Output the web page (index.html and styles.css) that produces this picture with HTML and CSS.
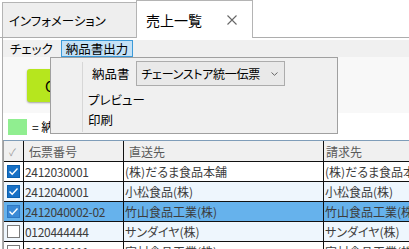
FILE: index.html
```html
<!DOCTYPE html>
<html lang="ja">
<head>
  <meta charset="UTF-8" />
  <title>売上一覧</title>
  <link rel="stylesheet" href="styles.css">
</head>
<body>
  <div class="tabs">
    <div class="tab">インフォメーション</div>
    <div class="tab active">売上一覧
      <svg class="close" width="10" height="10" viewBox="0 0 10 10"><path d="M0.5 0.5L9.5 9.5M9.5 0.5L0.5 9.5" stroke="#666" stroke-width="1.1"/></svg>
    </div>
  </div>

  <div class="page">
    <div class="menubar">
      <span class="menu-item">チェック</span>
      <span class="menu-item open">納品書出力</span>
    </div>

    <div class="toolbar">
      <button class="btn-green">CSV出力</button>
    </div>

    <div class="legend">
      <span class="swatch"></span>= 納品書出力済み
    </div>

    <div class="grid">
      <div class="row head">
        <div class="cell chk"><span class="tick">✓</span></div>
        <div class="cell">伝票番号</div>
        <div class="cell">直送先</div>
        <div class="cell last">請求先</div>
      </div>
      <div class="row">
        <div class="cell chk"><span class="box on"></span></div>
        <div class="cell num">2412030001</div>
        <div class="cell">(株)だるま食品本舗</div>
        <div class="cell">(株)だるま食品本舗</div>
      </div>
      <div class="row alt">
        <div class="cell chk"><span class="box on"></span></div>
        <div class="cell num">2412040001</div>
        <div class="cell">小松食品(株)</div>
        <div class="cell">小松食品(株)</div>
      </div>
      <div class="row sel">
        <div class="cell chk"><span class="box on"></span></div>
        <div class="cell num">2412040002-02</div>
        <div class="cell">竹山食品工業(株)</div>
        <div class="cell">竹山食品工業(株)</div>
      </div>
      <div class="row alt">
        <div class="cell chk"><span class="box"></span></div>
        <div class="cell num">0120444444</div>
        <div class="cell">サンダイヤ(株)</div>
        <div class="cell">サンダイヤ(株)</div>
      </div>
      <div class="row">
        <div class="cell chk"><span class="box"></span></div>
        <div class="cell num">0120111111</div>
        <div class="cell">宮村食品工業(株)</div>
        <div class="cell">宮村食品工業(株)</div>
      </div>
    </div>

    <!-- 納品書出力 のドロップダウン -->
    <div class="dropdown">
      <div class="dd-gutter"></div>
      <div class="dd-items">
        <div class="dd-host">
          <span>納品書</span>
          <div class="combo">
            <span>チェーンストア統一伝票</span>
            <svg class="arrow" width="7" height="4" viewBox="0 0 7 4"><path d="M0.5 0.5L3.5 3.3L6.5 0.5" fill="none" stroke="#666" stroke-width="1"/></svg>
          </div>
        </div>
        <div class="dd-item">プレビュー</div>
        <div class="dd-item">印刷</div>
      </div>
    </div>
  </div>
</body>
</html>
```

FILE: styles.css
```css
body {
  margin: 0;
  background: #fff;
  font-family: "Noto Sans CJK JP", sans-serif;
  font-size: 12px;
  font-feature-settings: "palt";
  color: #000;
  overflow: hidden;
}
.tabs {
  display: flex;
  align-items: flex-end;
  height: 37px;
  padding-left: 2px;
  border-bottom: 1px solid #adadad;
}
.tab {
  box-sizing: border-box;
  width: 135px;
  height: 35px;
  padding-left: 6px;
  display: flex;
  align-items: center;
  background: #eeeeee;
  border: 1px solid #b4b4b4;
  border-bottom: none;
  font-size: 12.5px;
}
.tab.active {
  width: 117px;
  height: 38px;
  margin-left: -1px;
  margin-bottom: -1px;
  padding-left: 9px;
  background: #fff;
  font-size: 14px;
}
.close {
  margin-left: 25px;
}
.page {
  position: relative;
  margin-left: 2px;
  padding-top: 2px;
  border-left: 1px solid #adadad;
}
.menubar {
  display: flex;
  gap: 3px;
  height: 17px;
  padding-left: 2px;
  background: #f0f0f0;
}
.menu-item {
  display: flex;
  align-items: center;
  padding: 0 4px;
  border: 1px solid transparent;
  font-size: 12.5px;
}
.menu-item.open {
  background: #c4e1f6;
  border-color: #3c9ad8;
}
.toolbar {
  height: 56px;
  background: #f8f8f8;
  padding-left: 24px;
  box-sizing: border-box;
  padding-top: 12px;
}
.btn-green {
  width: 100px;
  height: 33px;
  padding-left: 18px;
  text-align: left;
  background: #b6e61e;
  border: none;
  border-radius: 3px;
  box-shadow: 0 1px 2px rgba(0,0,0,0.35);
  font-family: inherit;
  font-size: 14px;
}
.legend {
  display: flex;
  align-items: center;
  gap: 5px;
  height: 27px;
  padding-left: 5px;
  font-size: 12px;
}
.swatch {
  width: 19px;
  height: 16px;
  background: #90ee90;
}
.grid {
  border-top: 1px solid #7f9db9;
  border-left: 1px solid #a0a0a0;
  width: 500px;
  color: #3c3c3c;
}
.row {
  display: grid;
  grid-template-columns: 20px 100px 200px 180px;
  height: 20px;
  box-sizing: border-box;
  border-bottom: 1px solid #111;
  background: #fff;
}
.row.head {
  height: 21px;
  background: #f0f0f0;
  color: #5a5a5a;
}
.row.alt {
  background: #eef6fd;
}
.row.sel {
  background: #66b2ec;
}
.cell {
  display: flex;
  align-items: center;
  padding-left: 1px;
  border-right: 1px solid #111;
  white-space: nowrap;
  overflow: hidden;
}
.head .cell {
  padding-left: 5px;
}
.head .cell.last {
  padding-left: 2px;
}
.num {
  letter-spacing: -0.3px;
}
.cell.chk {
  padding-left: 3px;
}
.tick {
  margin-left: 2px;
  font-size: 10px;
  color: #999;
}
.box {
  box-sizing: border-box;
  width: 13px;
  height: 13px;
  background: #fff;
  border: 1px solid #7a7a7a;
}
.box.on {
  border-color: #0a5fae;
  background: #1670c6 url("data:image/svg+xml;utf8,<svg xmlns='http://www.w3.org/2000/svg' viewBox='0 0 13 13'><path d='M2.5 6.5l2.7 2.7 5.3-5.6' fill='none' stroke='white' stroke-width='1.4'/></svg>") center/13px no-repeat;
}
.sel .box.on {
  background-color: #3b8ad6;
  border-color: #2d78c4;
}
.dropdown {
  position: absolute;
  left: 47px;
  top: 19px;
  width: 288px;
  height: 77px;
  box-sizing: border-box;
  display: flex;
  background: #f0f0f0;
  border: 1px solid #a0a0a0;
}
.dd-gutter {
  width: 31px;
  margin: 4px 0 1px;
  border-right: 1px solid #d7d7d7;
}
.dd-items {
  flex: 1;
}
.dd-host {
  display: flex;
  align-items: center;
  gap: 6px;
  height: 31px;
  padding-left: 9px;
  font-size: 12.5px;
}
.combo {
  box-sizing: border-box;
  width: 149px;
  height: 25px;
  padding: 0 6px 0 5px;
  display: flex;
  align-items: center;
  justify-content: space-between;
  background: #e9e9e9;
  border: 1px solid #acacac;
  font-size: 12px;
  letter-spacing: -0.3px;
  white-space: nowrap;
}
.dd-item {
  display: flex;
  align-items: center;
  height: 20px;
  padding-left: 5px;
  font-size: 12.5px;
}
```
